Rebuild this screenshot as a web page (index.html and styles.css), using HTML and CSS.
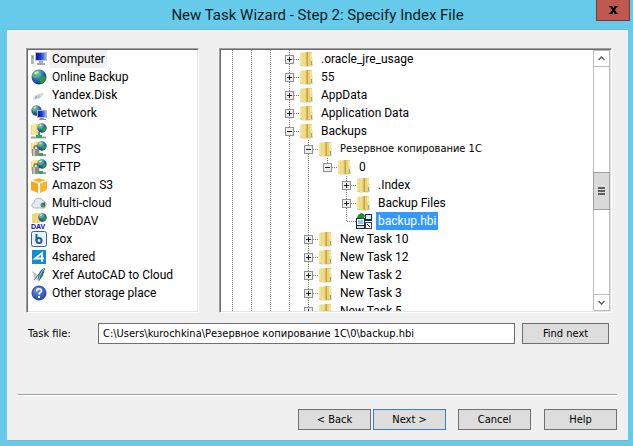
FILE: index.html
```html
<!DOCTYPE html>
<html lang="en">
<head>
    <meta charset="UTF-8">
    <meta name="viewport" content="width=device-width, initial-scale=1.0">
    <title>New Task Wizard - Step 2: Specify Index File</title>
    <link rel="stylesheet" href="styles.css">
</head>
<body>

<!-- Shared icons -->
<svg class="defs" aria-hidden="true">
    <defs>
        <linearGradient id="gold" x1="0" x2="1" y1="0" y2="0">
            <stop offset="0" stop-color="#f9efb0"/>
            <stop offset="0.6" stop-color="#ecd67a"/>
            <stop offset="1" stop-color="#d0ac3e"/>
        </linearGradient>
        <linearGradient id="screen" x1="0" x2="1" y1="0" y2="0">
            <stop offset="0" stop-color="#0a16a0"/>
            <stop offset="0.5" stop-color="#1c3fd8"/>
            <stop offset="1" stop-color="#8fb4f5"/>
        </linearGradient>
        <radialGradient id="sea" cx="0.4" cy="0.3" r="0.8">
            <stop offset="0" stop-color="#8fc4f5"/>
            <stop offset="0.5" stop-color="#2468b8"/>
            <stop offset="1" stop-color="#0c2a66"/>
        </radialGradient>
        <radialGradient id="help" cx="0.4" cy="0.3" r="0.8">
            <stop offset="0" stop-color="#6c94f0"/>
            <stop offset="1" stop-color="#1c3cb0"/>
        </radialGradient>
    </defs>
    <symbol id="folder" viewBox="0 0 16 16">
        <path d="M1 2l3-1v14l-3-1z" fill="#f3e498"/>
        <path d="M8 1h5v6l1 1v6l-2 1H8z" fill="#e9d27a"/>
        <path d="M11 2h2v5l-2 1z" fill="#f4e6a0"/>
        <path d="M12 8l2-1v7l-2 1z" fill="#f4e9ae"/>
        <path d="M4 1.500L8 1v14l-4-1z" fill="url(#gold)"/>
        <path d="M4 1.500v12.500" stroke="#d9bf5c" stroke-width="0.6"/>
        <path d="M8 1h1v14H8z" fill="#c8a540"/>
        <path d="M12 10h1v4h-1z" fill="#5ab4dc"/>
        <path d="M1 14l3 1h8l2-1" fill="none" stroke="#cfae48" stroke-width="0.6"/>
    </symbol>
    <symbol id="globe" viewBox="0 0 16 16">
        <circle cx="8" cy="8" r="7.500" fill="url(#sea)"/>
        <path d="M2 4c2-3 5-3 7-3l1 2-2 2-1 3-3 1-3-2z" fill="#5fb46a"/>
        <path d="M9 8l3-1 3 1c0 3-2 5-5 7l-2-4z" fill="#2c9c38"/>
        <path d="M3 4l3-2 2 1-3 3z" fill="#c4e8d8"/>
    </symbol>
    <symbol id="ftp" viewBox="0 0 16 16">
        <path d="M0 2l5-1h3v11H0z" fill="#f2d672"/>
        <path d="M1 2l4-1v11H1z" fill="#fae79a"/>
        <path d="M0 14.500h15" stroke="#9aa4a4" stroke-width="2"/>
        <path d="M8 9v4" stroke="#2ca868" stroke-width="2"/>
        <path d="M5 12h6v3H5z" fill="#2ca868"/>
        <use href="#globe" x="6" y="0" width="10" height="10"/>
    </symbol>
    <symbol id="ftps" viewBox="0 0 16 16">
        <path d="M0 2l5-1h4v11H0z" fill="#f2d672"/>
        <path d="M1 2l4-1v8H1z" fill="#fae79a"/>
        <path d="M7 14h8" stroke="#9aa4a4" stroke-width="2"/>
        <path d="M8 12h4v3H8z" fill="#2ca868"/>
        <path d="M3 9V7c0-3 4-3 4 0v2" fill="none" stroke="#777b72" stroke-width="1.500"/>
        <path d="M1 8h7v7H1z" fill="#8b8e80"/>
        <path d="M2 8h2v7H2z" fill="#c4c6ba"/>
        <use href="#globe" x="6" y="0" width="10" height="10"/>
    </symbol>
</svg>

<header class="titlebar">
    <h1>New Task Wizard - Step 2: Specify Index File</h1>
    <button class="close" type="button" aria-label="Close">
        <svg width="9" height="8" viewBox="0 0 9 8"><path d="M0 0h3.200l1.300 2L5.800 0H9v1H8L5.700 4 8 7h1v1H5.800L4.500 6 3.200 8H0V7h1l2.300-3L1 1H0z" fill="#000"/></svg>
    </button>
</header>

<main class="client">
    <div class="panels">
        <!-- Storage places -->
        <div class="panel">
            <ul class="places">
                <li>
                    <svg class="icon" viewBox="0 0 16 16"><path d="M0 4h3v9H0z" fill="#b8b8b4"/><path d="M1 5h1v2H1z" fill="#30c030"/><path d="M4 1h12v9H4z" fill="#c2c2bc"/><path d="M5 2h10v7H5z" fill="url(#screen)"/><path d="M8 10h4v2h2v2H6v-2h2z" fill="#a8a8a4"/></svg>
                    <span class="label current">Computer</span>
                </li>
                <li><svg class="icon"><use href="#globe"/></svg><span class="label">Online Backup</span></li>
                <li>
                    <svg class="icon" viewBox="0 0 16 16"><path d="M2 11c1-3 4-4 6-4l-2 5c-2 1-4 1-4-1z" fill="#dce3e6"/><path d="M4 10l3-2-1 3-2 1z" fill="#94a8b2"/><path d="M8 7l5-1-4 5-3 1z" fill="#bccad0"/><path d="M9 8l3-1-3 2z" fill="#eef2f4"/></svg>
                    <span class="label">Yandex.Disk</span>
                </li>
                <li>
                    <svg class="icon" viewBox="0 0 16 16"><use href="#globe" width="11" height="11"/><path d="M6 5h10v8H6z" fill="#b4b8c4"/><path d="M7 6h8v6H7z" fill="url(#screen)"/><path d="M9 13h4v1h2v1H8v-1h1z" fill="#8c90a0"/></svg>
                    <span class="label">Network</span>
                </li>
                <li><svg class="icon"><use href="#ftp"/></svg><span class="label">FTP</span></li>
                <li><svg class="icon"><use href="#ftps"/></svg><span class="label">FTPS</span></li>
                <li><svg class="icon"><use href="#ftps"/></svg><span class="label">SFTP</span></li>
                <li>
                    <svg class="icon" viewBox="0 0 16 16"><path d="M1 3l7-2 7 2-7 3z" fill="#fbc85a"/><path d="M0 4l7 2.500V16l-7-3z" fill="#f5a81c"/><path d="M16 4L9 6.500V16l7-3z" fill="#f9b62e"/><path d="M3 3l5-1.200L13 3 8 4.500z" fill="#f5ac24"/></svg>
                    <span class="label">Amazon S3</span>
                </li>
                <li>
                    <svg class="icon" viewBox="0 0 16 16"><path d="M4 13c-4 0-4-5-1-5 0-6 8-6 9-2 4 0 4 7 1 7z" fill="#e3e9ee" stroke="#a9b5be"/><circle cx="12" cy="10" r="2.500" fill="#5d8a78"/><path d="M11 9l3-2v4z" fill="#3c6c40"/></svg>
                    <span class="label">Multi-cloud</span>
                </li>
                <li>
                    <svg class="icon" viewBox="0 0 16 16"><path d="M1 1l4-1h4v10H1z" fill="#f2d672"/><use href="#globe" x="7" y="0" width="9" height="9"/><text class="dav" x="0" y="16">DAV</text></svg>
                    <span class="label">WebDAV</span>
                </li>
                <li>
                    <svg class="icon" viewBox="0 0 16 16"><rect x="0.500" y="0.500" width="15" height="15" rx="2" fill="#e9f2fa" stroke="#2d6699"/><path d="M5.500 3v7" stroke="#1f5c94" stroke-width="2"/><circle cx="8" cy="9.500" r="2.500" fill="#e9f2fa" stroke="#1f5c94" stroke-width="2"/></svg>
                    <span class="label">Box</span>
                </li>
                <li>
                    <svg class="icon" viewBox="0 0 16 16"><path d="M1 1h14v14H1z" fill="#0e8fd4"/><path d="M11 13V4L4 9.500h9" fill="none" stroke="#fff" stroke-width="1.800"/></svg>
                    <span class="label">4shared</span>
                </li>
                <li>
                    <svg class="icon" viewBox="0 0 16 16"><path d="M1 4l5 3 2 8-3-3-1 2-1-4z" fill="#c3c8ca"/><path d="M3 13l5-6" stroke="#70787c"/><path d="M14 1c-4 1-7 5-7 10l1 3c2-2 5-6 6-13z" fill="#2d6d92"/><path d="M13 2c-2 2-4 5-5 10" stroke="#9cc8dc" fill="none"/></svg>
                    <span class="label">Xref AutoCAD to Cloud</span>
                </li>
                <li>
                    <svg class="icon" viewBox="0 0 16 16"><circle cx="8" cy="8" r="7" fill="url(#help)" stroke="#2440a0"/><path d="M5.500 6.500c0-3.500 5-3.500 5-.7C10.500 7.500 8 7.500 8 9.500" fill="none" stroke="#fff" stroke-width="1.600"/><path d="M7 11h2v2H7z" fill="#fff"/></svg>
                    <span class="label">Other storage place</span>
                </li>
            </ul>
        </div>

        <!-- Folder tree -->
        <div class="panel">
            <ul class="tree">
                <li><i></i><i></i><i></i><i class="node"><button type="button" aria-label="Expand"></button></i><svg class="icon"><use href="#folder"/></svg><span class="label">.oracle_jre_usage</span></li>
                <li><i></i><i></i><i></i><i class="node"><button type="button" aria-label="Expand"></button></i><svg class="icon"><use href="#folder"/></svg><span class="label">55</span></li>
                <li><i></i><i></i><i></i><i class="node"><button type="button" aria-label="Expand"></button></i><svg class="icon"><use href="#folder"/></svg><span class="label">AppData</span></li>
                <li><i></i><i></i><i></i><i class="node"><button type="button" aria-label="Expand"></button></i><svg class="icon"><use href="#folder"/></svg><span class="label">Application Data</span></li>
                <li><i></i><i></i><i></i><i class="node"><button class="open" type="button" aria-label="Collapse"></button></i><svg class="icon"><use href="#folder"/></svg><span class="label">Backups</span></li>
                <li><i></i><i></i><i></i><i></i><i class="node"><button class="open" type="button" aria-label="Collapse"></button></i><svg class="icon"><use href="#folder"/></svg><span class="label tahoma">Резервное копирование 1С</span></li>
                <li><i></i><i></i><i></i><i></i><i></i><i class="node last"><button class="open" type="button" aria-label="Collapse"></button></i><svg class="icon"><use href="#folder"/></svg><span class="label">0</span></li>
                <li><i></i><i></i><i></i><i></i><i></i><i class="blank"></i><i class="node"><button type="button" aria-label="Expand"></button></i><svg class="icon"><use href="#folder"/></svg><span class="label">.Index</span></li>
                <li><i></i><i></i><i></i><i></i><i></i><i class="blank"></i><i class="node"><button type="button" aria-label="Expand"></button></i><svg class="icon"><use href="#folder"/></svg><span class="label">Backup Files</span></li>
                <li>
                    <i></i><i></i><i></i><i></i><i></i><i class="blank"></i><i class="node last"></i>
                    <svg class="icon" viewBox="0 0 16 16"><path d="M0 5h9v11H0z" fill="#1c2450"/><path d="M1 6h7v6H1z" fill="#fff"/><path d="M2 7h5v4H2z" fill="#8ccfd8"/><path d="M1 13h7v2H1z" fill="#d8dce8"/><path d="M9 1h7v7H9z" fill="#1c2450"/><path d="M10 2h5v4h-5z" fill="#d5eef4"/><path d="M9 9h7v7H9z" fill="#30386c"/><path d="M10 10h5v5h-5z" fill="#fff"/><path d="M11 11l3 3" stroke="#1c2450"/><path d="M1 5l1-3 3-2 3 1 1 2-2 3-2-1z" fill="#1f9030"/></svg>
                    <span class="label selected">backup.hbi</span>
                </li>
                <li><i></i><i></i><i></i><i></i><i class="node"><button type="button" aria-label="Expand"></button></i><svg class="icon"><use href="#folder"/></svg><span class="label">New Task 10</span></li>
                <li><i></i><i></i><i></i><i></i><i class="node"><button type="button" aria-label="Expand"></button></i><svg class="icon"><use href="#folder"/></svg><span class="label">New Task 12</span></li>
                <li><i></i><i></i><i></i><i></i><i class="node"><button type="button" aria-label="Expand"></button></i><svg class="icon"><use href="#folder"/></svg><span class="label">New Task 2</span></li>
                <li><i></i><i></i><i></i><i></i><i class="node"><button type="button" aria-label="Expand"></button></i><svg class="icon"><use href="#folder"/></svg><span class="label">New Task 3</span></li>
                <li><i></i><i></i><i></i><i></i><i class="node"><button type="button" aria-label="Expand"></button></i><svg class="icon"><use href="#folder"/></svg><span class="label">New Task 5</span></li>
            </ul>
            <div class="scrollbar">
                <button class="arrow" type="button" aria-label="Scroll up"><svg width="7" height="5" viewBox="0 0 7 5"><path d="M0.500 4l3-3 3 3" fill="none" stroke="#606060" stroke-width="1.500"/></svg></button>
                <div class="track before"></div>
                <div class="thumb"><span></span><span></span><span></span></div>
                <div class="track after"></div>
                <button class="arrow" type="button" aria-label="Scroll down"><svg width="7" height="5" viewBox="0 0 7 5"><path d="M0.500 1l3 3 3-3" fill="none" stroke="#606060" stroke-width="1.500"/></svg></button>
            </div>
        </div>
    </div>

    <div class="task-row">
        <label for="taskFile">Task file:</label>
        <input id="taskFile" type="text" value="C:\Users\kurochkina\Резервное копирование 1С\0\backup.hbi">
        <button class="btn find" type="button">Find next</button>
    </div>

    <div class="footer">
        <button class="btn" type="button">&lt; Back</button>
        <button class="btn default" type="button">Next &gt;</button>
        <button class="btn cancel" type="button">Cancel</button>
        <button class="btn help" type="button">Help</button>
    </div>
</main>

</body>
</html>
```

FILE: styles.css
```css
* {
    box-sizing: border-box;
}
body {
    margin: 0;
    height: 100vh;
    padding: 0 5px 5px 7px;
    display: flex;
    flex-direction: column;
    background-color: #66caea;
    font-family: Roboto, "Open Sans", sans-serif;
    font-size: 12px;
    color: #000;
}
button {
    padding: 0;
    margin: 0;
    font: inherit;
    color: inherit;
}
ul {
    list-style: none;
    margin: 0;
    padding: 0;
}
.defs {
    position: absolute;
    width: 0;
    height: 0;
}

/* title bar */
.titlebar {
    height: 29px;
    display: grid;
    grid-template-columns: 1fr auto 1fr;
    align-items: start;
}
.titlebar h1 {
    grid-column: 2;
    margin: 0;
    font-size: 15px;
    font-weight: 400;
    line-height: 30px;
    color: #0c1c24;
}
.close {
    justify-self: end;
    width: 34px;
    height: 21px;
    margin-right: -2px;
    border: 1px solid #6e3c3c;
    border-top: none;
    background-color: #c1584f;
    display: flex;
    align-items: center;
    justify-content: center;
}

/* window body */
.client {
    flex: 1;
    min-height: 0;
    display: flex;
    flex-direction: column;
    background-color: #f0f0f0;
    border-top: 1px solid #7fb4c8;
    border-bottom: 1px solid #7fb4c8;
    padding: 18px 11px 10px;
}
.panels {
    flex: 1;
    min-height: 0;
    display: grid;
    grid-template-columns: 173px 1fr;
    grid-template-rows: minmax(0, 1fr);
    gap: 20px;
    padding: 0 5px 0 8px;
}
.panel {
    display: flex;
    padding: 1px;
    background-color: #fff;
    border: 1px solid;
    border-color: #a0a0a0 #fff #fff #a0a0a0;
    box-shadow: inset 1px 1px #696969, inset -1px -1px #e3e3e3;
}
.places, .tree {
    flex: 1;
    overflow: hidden;
}
.places li, .tree li {
    height: 18px;
    display: flex;
    align-items: center;
    white-space: nowrap;
}
.places li {
    padding-left: 3px;
}
.tree li {
    padding-left: 2px;
}
.icon {
    width: 16px;
    height: 16px;
    flex: none;
}
.dav {
    font: bold 7px "Liberation Sans", sans-serif;
    fill: #0000e0;
}
.label {
    padding: 0 2px;
    line-height: 18px;
    margin-left: 3px;
}
.tree .label {
    margin-left: 4px;
}
.current {
    background-color: #f0f0f0;
}
.selected {
    background-color: #3399ff;
    color: #fff;
}

/* tree guides */
.tree i {
    flex: none;
    width: 19px;
    height: 18px;
    display: flex;
    align-items: center;
    background: repeating-linear-gradient(#808080 0 1px, #fff 1px 2px) 9px 0 / 1px 100% no-repeat;
}
.tree .blank {
    background: none;
}
.tree .node {
    padding-left: 5px;
    background:
        repeating-linear-gradient(#808080 0 1px, #fff 1px 2px) 9px 0 / 1px 100% no-repeat,
        repeating-linear-gradient(90deg, #808080 0 1px, #fff 1px 2px) 10px 9px / 9px 1px no-repeat;
}
.tree .last {
    background-size: 1px 10px, 9px 1px;
}
.tree button {
    width: 9px;
    height: 9px;
    border: 1px solid #919191;
    background:
        linear-gradient(#222, #222) center / 5px 1px no-repeat,
        linear-gradient(#222, #222) center / 1px 5px no-repeat,
        #ececec;
}
.tree .open {
    background: linear-gradient(#222, #222) center / 5px 1px no-repeat, #ececec;
}

/* scrollbar */
.scrollbar {
    width: 17px;
    flex: none;
    display: flex;
    flex-direction: column;
}
.arrow, .thumb {
    flex: none;
    display: flex;
    align-items: center;
    justify-content: center;
    border: 1px solid #bcbcbc;
    background-color: #fff;
}
.arrow {
    height: 17px;
}
.track {
    border: 1px solid #bcbcbc;
    border-width: 0 1px;
}
.before {
    flex: 105;
}
.after {
    flex: 84;
}
.thumb {
    height: 38px;
    flex-direction: column;
    gap: 1px;
    border-color: #a0a0a0;
    background-color: #dadada;
}
.thumb span {
    width: 7px;
    height: 2px;
    background-color: #606060;
}

/* task file */
.tahoma, .task-row, .btn {
    font-family: "DejaVu Sans Condensed", "DejaVu Sans", sans-serif;
    font-size: 11px;
}
.task-row {
    display: flex;
    align-items: center;
    padding: 10px 8px 50px 10px;
}
.task-row label {
    width: 70px;
}
.task-row input {
    flex: 1;
    min-width: 0;
    height: 21px;
    padding: 0 4px;
    border: 1px solid #707070;
    background-color: #fff;
    font: inherit;
    color: #000;
}
.btn {
    width: 73px;
    height: 21px;
    border: 1px solid #707070;
    background-color: #dddddd;
}
.find {
    width: 87px;
    margin-left: 7px;
}

/* wizard buttons */
.footer {
    display: flex;
    justify-content: flex-end;
    padding-top: 14px;
    border-top: 1px solid #a0a0a0;
    box-shadow: inset 0 1px #fff;
}
.default {
    margin-left: 2px;
    border-color: #3c7fb1;
}
.cancel {
    margin-left: 12px;
}
.help {
    margin-left: 13px;
}
```
